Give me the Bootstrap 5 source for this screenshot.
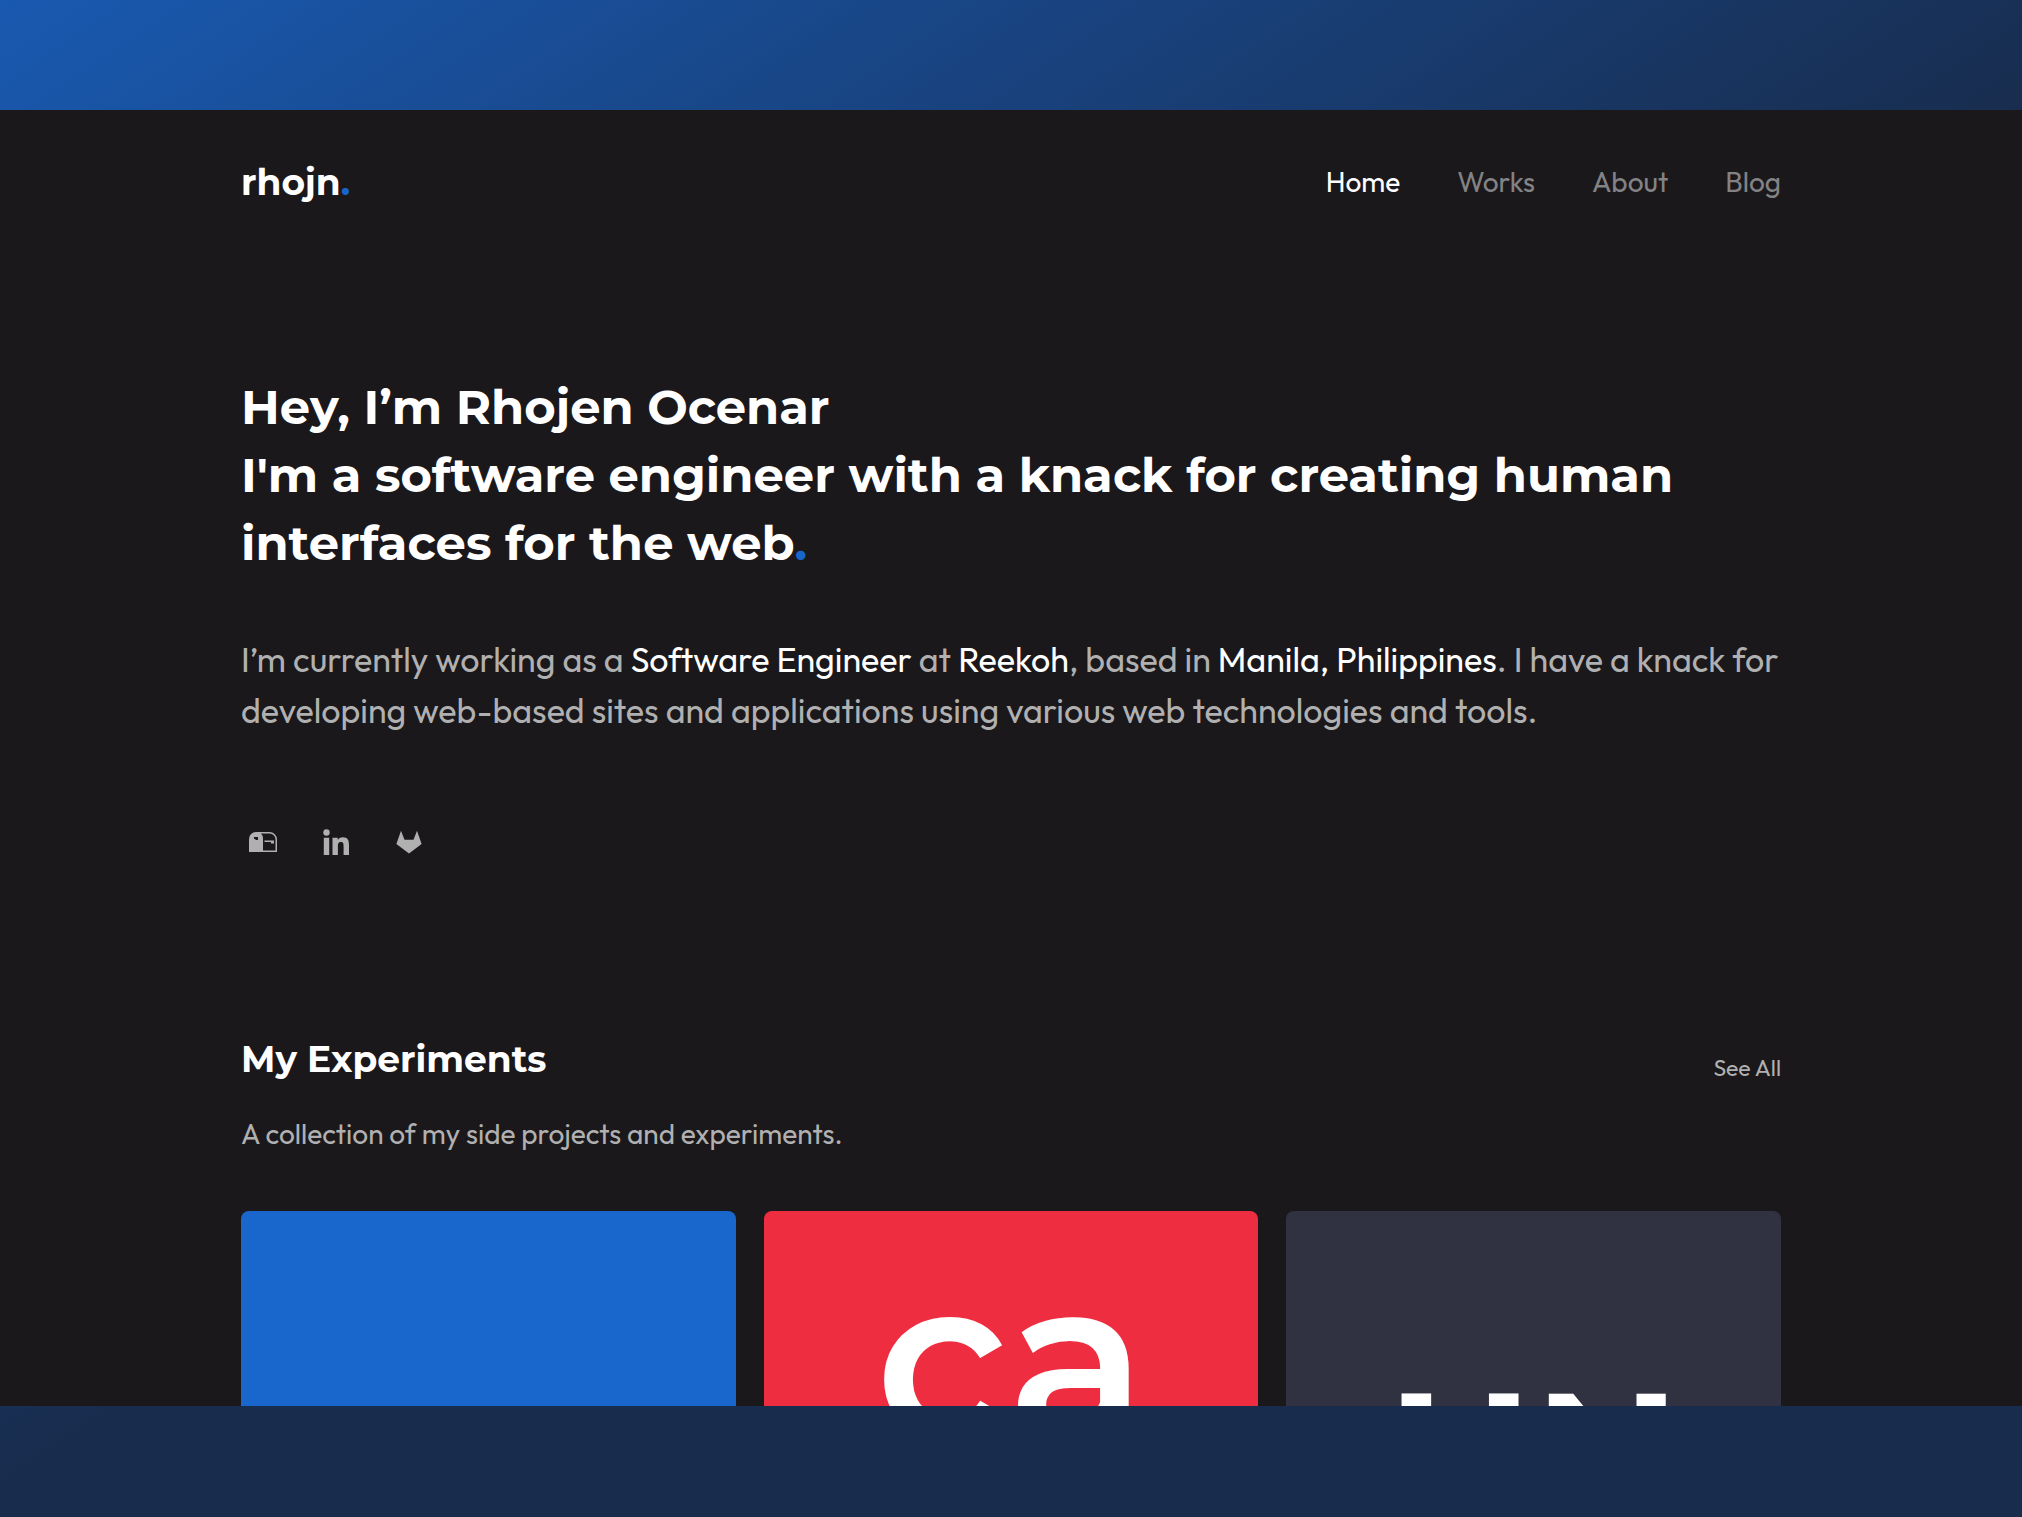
<!DOCTYPE html>
<html lang="en">
<head>
<meta charset="utf-8">
<meta name="viewport" content="width=device-width, initial-scale=1">
<title>rhojn.</title>
<link href="https://cdn.jsdelivr.net/npm/bootstrap@5.3.0/dist/css/bootstrap.min.css" rel="stylesheet">
<style>
  body { font-family: Outfit, Lato, sans-serif; font-size: 28px; line-height: 36px; color: #b1b0b1;
    padding: 110px 0 111px; height: 100vh; background: linear-gradient(146deg, #1959b0, #182c4d 52%) no-repeat; }
  .site { background: #1a181b; min-height: 0; }
  .wrap { max-width: 1588px; padding: 0 24px; }
  a { color: inherit; text-decoration: none; }
  a:hover { color: #fff; }
  h1, h2, .brand { font-family: Montserrat, Inter, sans-serif; font-weight: 700; color: #fff; margin: 0; }
  .dot { color: #1966cb; }
  .top-bar { padding-top: 50px; }
  .brand { font-size: 36px; line-height: 44px; }
  .menu { gap: 57px; color: #838284; }
  .menu .active { color: #fff; }
  .hero { padding-top: 169px; }
  h1 { font-size: 48px; line-height: 68px; }
  .intro { font-size: 34px; line-height: 51px; margin: 57px 0 0; }
  .intro strong { font-weight: 400; color: #fff; }
  .social { gap: 29px; padding-top: 84px; }
  .social a { width: 44px; height: 44px; color: #b1b0b1; }
  .work { padding-top: 173px; }
  h2 { font-size: 36px; line-height: 44px; }
  .all { font-size: 23px; line-height: 26px; }
  .tagline { margin: 35px 0 59px; }
  .tiles { --bs-gutter-x: 28px; }
  .tile { height: 492px; border-radius: 8px; color: #fff; }
  .t-blue { background: #1967cc; }
  .t-red { background: #ef2d41; }
  .t-slate { background: #303241; }
  .t-red span { font: 600 228px/295px Montserrat, Lato, sans-serif; }
  .t-slate span { font: 700 182px/228px Montserrat, Inter, sans-serif; }
</style>
<script src="https://cdn.jsdelivr.net/npm/bootstrap@5.3.0/dist/js/bootstrap.bundle.min.js"></script>
</head>
<body class="d-flex flex-column">
<div class="site flex-grow-1 overflow-hidden">
  <div class="wrap mx-auto">
    <header class="top-bar d-flex justify-content-between align-items-center">
      <a class="brand" href="#">rhojn<span class="dot">.</span></a>
      <nav class="menu d-flex" aria-label="Main">
        <a class="active" href="#" aria-current="page">Home</a>
        <a href="#">Works</a>
        <a href="#">About</a>
        <a href="#">Blog</a>
      </nav>
    </header>
    <main>
      <section class="hero">
        <h1>Hey, I’m Rhojen Ocenar<br>I'm a software engineer with a knack for creating human interfaces for the web<span class="dot">.</span></h1>
        <p class="intro">I’m currently working as a <strong>Software Engineer</strong> at <strong>Reekoh</strong>, based in <strong>Manila, Philippines</strong>. I have a knack for developing web-based sites and applications using various web technologies and tools.</p>
        <div class="social d-flex">
          <a class="d-flex align-items-center justify-content-center" href="#" aria-label="Email">
            <svg width="30" height="22" viewBox="0 0 30 22" fill="currentColor"><path fill-rule="evenodd" d="M8 1h13.500a7.500 7.500 0 0 1 7.500 7.500V21H1V8a7 7 0 0 1 7-7zM13 2.500A7 7 0 0 1 15 8v11.500h12.500v-11a6 6 0 0 0-6-6zM6 6v2h1.500v1h2.500V6z"/><path d="M16.500 9.500h9.500v3h-3v-1.500h-6.500z"/></svg>
          </a>
          <a class="d-flex align-items-center justify-content-center" href="#" aria-label="LinkedIn">
            <svg width="26" height="26" viewBox="0 0 26 26" fill="currentColor"><circle cx="3.500" cy="3.500" r="3.200"/><path d="M.8 8.700h5.400V26H.8zM9.500 8.700h5.200V11c.9-1.600 2.700-2.800 5.200-2.800 5 0 6.100 3.300 6.100 7.800v10h-5.400v-8.800c0-2.200-.2-4.300-2.700-4.300-2.600 0-3 2-3 4.200V26H9.500z"/></svg>
          </a>
          <a class="d-flex align-items-center justify-content-center" href="#" aria-label="GitLab">
            <svg width="26" height="24" viewBox="0 0 26 24" fill="currentColor"><path d="M5 .8 8.500 9.700h9L21 .8l4.600 13.200L13 23.600.4 14z"/></svg>
          </a>
        </div>
      </section>
      <section class="work">
        <div class="d-flex justify-content-between align-items-end">
          <h2>My Experiments</h2>
          <a class="all" href="#">See All</a>
        </div>
        <p class="tagline">A collection of my side projects and experiments.</p>
        <div class="tiles row">
          <div class="col-4"><a class="tile t-blue d-block" href="#" aria-label="Project"></a></div>
          <div class="col-4"><a class="tile t-red d-flex align-items-start justify-content-center overflow-hidden" href="#"><span>ca</span></a></div>
          <div class="col-4"><a class="tile t-slate d-flex align-items-center justify-content-center overflow-hidden" href="#"><span>HN</span></a></div>
        </div>
      </section>
    </main>
  </div>
</div>
</body>
</html>
